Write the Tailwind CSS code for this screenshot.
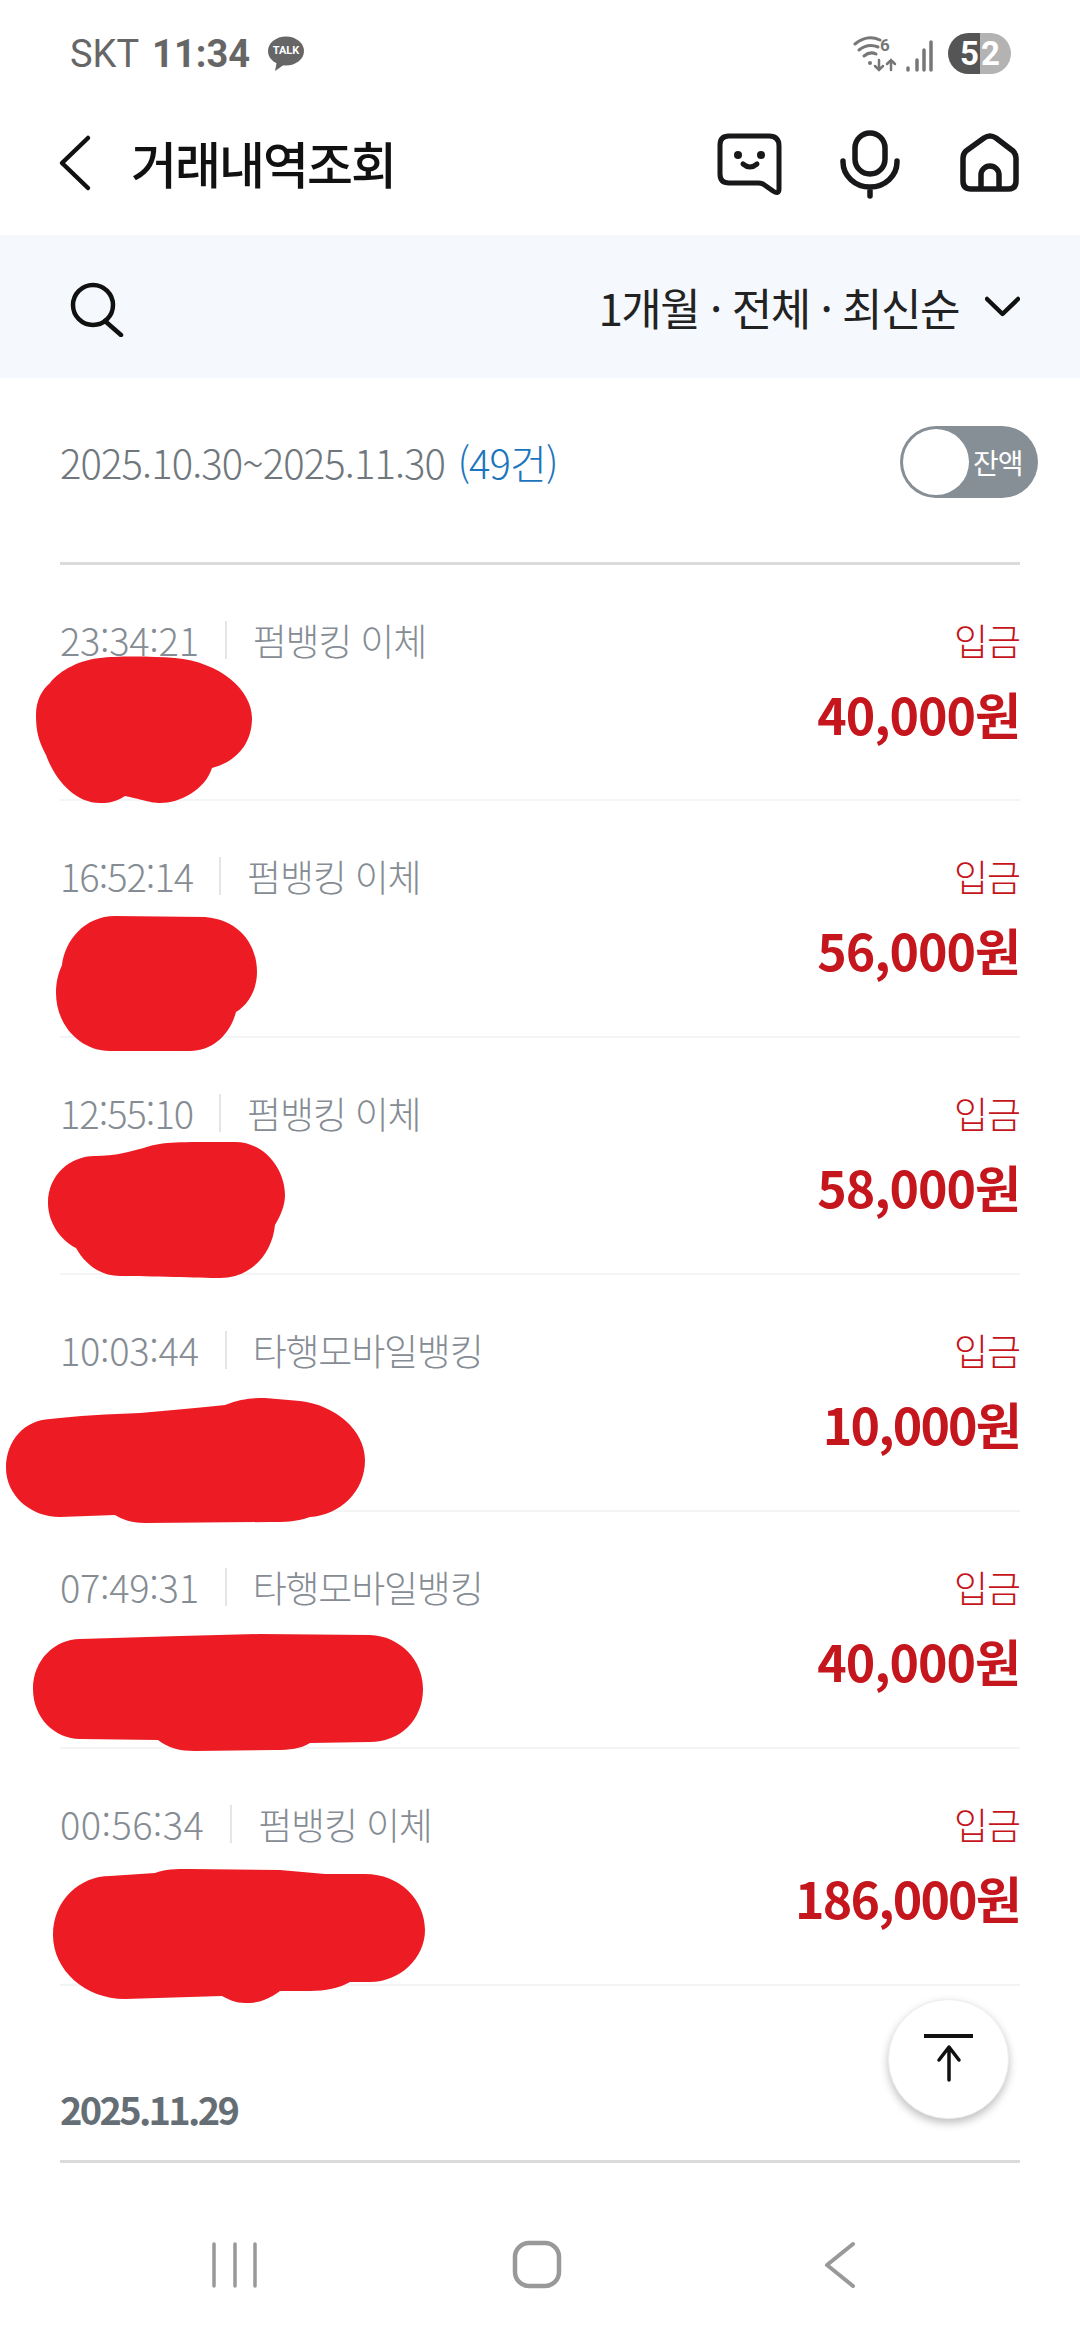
<!DOCTYPE html>
<html lang="ko">
  <head>
    <meta charset="UTF-8" />
    <meta name="viewport" content="width=device-width, initial-scale=1.0" />
    <title>거래내역조회</title>
    <script src="https://cdn.jsdelivr.net/npm/@tailwindcss/browser@4"></script>
  </head>
  <body class="bg-white">
    <div class="relative w-[1080px] h-[2340px] overflow-hidden bg-white flex flex-col font-['Noto_Sans_CJK_KR','Noto_Sans',sans-serif]">
      <!-- Status bar -->
      <div class="h-[104px] pt-[3px] flex items-center justify-between pl-[70px] pr-[69px] text-[#666] font-['Roboto','Noto_Sans',sans-serif]">
        <div class="flex items-center">
          <span class="text-[38px] leading-none">SKT</span>
          <span class="ml-[13px] text-[38px] leading-none font-bold">11:34</span>
          <span class="relative ml-[18px] w-[36px] h-[36px]">
            <svg class="absolute inset-0" viewBox="0 0 36 36" width="36" height="36">
              <ellipse cx="18" cy="15" rx="18" ry="14.5" fill="#666" />
              <path d="M9 25 L7 35 L17 28Z" fill="#666" />
            </svg>
            <span class="absolute left-0 top-[9px] w-[36px] text-center text-white text-[11px] leading-[12px] font-bold">TALK</span>
          </span>
        </div>
        <div class="flex items-center">
          <svg viewBox="853 30 44 44" width="44" height="44" fill="none" stroke="#777" stroke-linecap="round">
            <path d="M855 42 Q867 32 880 38" stroke-width="3" />
            <path d="M859 48 Q868 41 878 45" stroke-width="3" />
            <path d="M864 54 Q870 49 876 52" stroke-width="3" />
            <circle cx="870" cy="61" r="2" fill="#777" stroke="none" />
            <path d="M879 58 V68 M875 64 L879 68 L883 64 M891 68 V58 M887 62 L891 58 L895 62" stroke-width="2.5" />
          </svg>
          <span class="absolute left-[880px] top-[36px] text-[#777] text-[17px] leading-[18px] font-bold">6</span>
          <svg class="ml-[9px]" viewBox="906 30 28 44" width="28" height="44" fill="none" stroke="#777" stroke-width="3.5" stroke-linecap="round">
            <path d="M908 66 V68 M917 58 V68 M924 48 V68 M931 40 V68" />
          </svg>
          <div class="ml-[14px] w-[63px] h-[41px] rounded-full overflow-hidden flex text-white text-[33px] leading-[41px] font-bold">
            <span class="w-[32px] bg-[#555] text-right pr-[1px]">5</span>
            <span class="w-[31px] bg-[#b3b3b3] pl-[1px]">2</span>
          </div>
        </div>
      </div>

      <!-- Header -->
      <div class="h-[131px] pb-[10px] flex items-center justify-between pl-[50px] pr-[50px] shrink-0">
        <div class="flex items-center">
          <svg viewBox="50 125 50 80" width="50" height="80" fill="none" stroke="#111" stroke-width="4.5" stroke-linecap="round" stroke-linejoin="round">
            <path d="M88 138 L62 163 L88 188" />
          </svg>
          <h1 class="ml-[31px] mb-[6px] text-[50px] leading-none font-medium tracking-[-2px] text-[#111]">거래내역조회</h1>
        </div>
        <div class="flex items-center gap-[40px]">
          <svg viewBox="710 125 80 80" width="80" height="80" fill="none" stroke="#18181a" stroke-width="5" stroke-linecap="round" stroke-linejoin="round">
            <path d="M729 136 H769 Q779 136 779 146 V189 Q779 195 773 191 L763 184 Q761 183 758 183 H729 Q720 183 720 174 V145 Q720 136 729 136Z" />
            <circle cx="738" cy="155" r="4" fill="#18181a" stroke="none" />
            <circle cx="761" cy="155" r="4" fill="#18181a" stroke="none" />
            <path d="M743 164 Q750 170 757 164" />
          </svg>
          <svg viewBox="830 125 80 80" width="80" height="80" fill="none" stroke="#18181a" stroke-width="5.5" stroke-linecap="round">
            <rect x="855" y="133" width="30" height="41" rx="15" />
            <path d="M843 161 V162 A27 25 0 0 0 897 162 V161 M870 188 V196" />
          </svg>
          <svg viewBox="950 125 80 80" width="80" height="80" fill="none" stroke="#18181a" stroke-width="5.5" stroke-linejoin="round">
            <path d="M963 158 Q963 154 966 151 L984 138 Q990 134 996 138 L1013 151 Q1016 154 1016 158 V181 Q1016 189 1008 189 H971 Q963 189 963 181Z" />
            <path d="M981 189 V175 A9 9 0 0 1 999 175 V189" />
          </svg>
        </div>
      </div>

      <!-- Filter bar -->
      <div class="h-[143px] shrink-0 bg-[#f5f8fc] flex items-center justify-between pl-[70px] pr-[60px]">
        <svg viewBox="70 275 54 60" width="54" height="60" fill="none" stroke="#111" stroke-width="4.5" stroke-linecap="round">
          <circle cx="93" cy="303" r="20" />
          <path d="M105 319 L121 333" />
        </svg>
        <div class="flex items-center">
          <span class="text-[44px] leading-none tracking-[-1.5px] text-[#222]">1개월 · 전체 · 최신순</span>
          <svg class="ml-[26px]" viewBox="985 295 35 28" width="35" height="28" fill="none" stroke="#111" stroke-width="4.5" stroke-linecap="round" stroke-linejoin="round">
            <path d="M987 301 L1002.500 316 L1018 301" />
          </svg>
        </div>
      </div>

      <!-- Period + balance toggle -->
      <div class="h-[184px] shrink-0 pb-[16px] flex items-center justify-between pl-[60px] pr-[42px]">
        <div class="text-[40px] leading-none tracking-[-0.9px] font-light text-[#6f777d]">
          2025.10.30~2025.11.30 <span class="ml-[2px] text-[#1c75bc]">(49건)</span>
        </div>
        <div class="relative w-[138px] h-[72px] rounded-full bg-[#868e96] flex items-center">
          <div class="absolute left-[3px] top-[3px] w-[66px] h-[66px] rounded-full bg-white"></div>
          <span class="ml-[73px] text-white text-[28px] leading-none tracking-[-1px]">잔액</span>
        </div>
      </div>

      <div class="mx-[60px]">
        <div class="h-[3px] bg-[#d9dbdd]"></div>

        <div class="h-[236px] flex justify-between border-b-2 border-[#f3f4f5] pt-[51px]">
          <div class="flex items-start text-[37px] leading-[48px] tracking-[-1.2px] font-light text-[#858c93]">
            <span class="text-[38px] tracking-[-0.3px]">23:34:21</span>
            <span class="mx-[26px] mt-[5px] w-[2px] h-[38px] bg-[#e3e5e7]"></span>
            <span>펌뱅킹 이체</span>
          </div>
          <div class="flex flex-col items-end">
            <span class="text-[37px] leading-[48px] font-light tracking-[-1px] text-[#c5141b]">입금</span>
            <span class="mt-[25px] text-[50px] leading-[48px] font-bold tracking-[-1px] text-[#c4161c]">40,000원</span>
          </div>
        </div>

        <div class="h-[237px] flex justify-between border-b-2 border-[#f3f4f5] pt-[51px]">
          <div class="flex items-start text-[37px] leading-[48px] tracking-[-1.2px] font-light text-[#858c93]">
            <span class="text-[38px] tracking-[-1px]">16:52:14</span>
            <span class="mx-[26px] mt-[5px] w-[2px] h-[38px] bg-[#e3e5e7]"></span>
            <span>펌뱅킹 이체</span>
          </div>
          <div class="flex flex-col items-end">
            <span class="text-[37px] leading-[48px] font-light tracking-[-1px] text-[#c5141b]">입금</span>
            <span class="mt-[25px] text-[50px] leading-[48px] font-bold tracking-[-1px] text-[#c4161c]">56,000원</span>
          </div>
        </div>

        <div class="h-[237px] flex justify-between border-b-2 border-[#f3f4f5] pt-[51px]">
          <div class="flex items-start text-[37px] leading-[48px] tracking-[-1.2px] font-light text-[#858c93]">
            <span class="text-[38px] tracking-[-1px]">12:55:10</span>
            <span class="mx-[26px] mt-[5px] w-[2px] h-[38px] bg-[#e3e5e7]"></span>
            <span>펌뱅킹 이체</span>
          </div>
          <div class="flex flex-col items-end">
            <span class="text-[37px] leading-[48px] font-light tracking-[-1px] text-[#c5141b]">입금</span>
            <span class="mt-[25px] text-[50px] leading-[48px] font-bold tracking-[-1px] text-[#c4161c]">58,000원</span>
          </div>
        </div>

        <div class="h-[237px] flex justify-between border-b-2 border-[#f3f4f5] pt-[51px]">
          <div class="flex items-start text-[37px] leading-[48px] tracking-[-1.2px] font-light text-[#858c93]">
            <span class="text-[38px] tracking-[-0.3px]">10:03:44</span>
            <span class="mx-[26px] mt-[5px] w-[2px] h-[38px] bg-[#e3e5e7]"></span>
            <span>타행모바일뱅킹</span>
          </div>
          <div class="flex flex-col items-end">
            <span class="text-[37px] leading-[48px] font-light tracking-[-1px] text-[#c5141b]">입금</span>
            <span class="mt-[25px] text-[50px] leading-[48px] font-bold tracking-[-1.8px] text-[#c4161c]">10,000원</span>
          </div>
        </div>

        <div class="h-[237px] flex justify-between border-b-2 border-[#f3f4f5] pt-[51px]">
          <div class="flex items-start text-[37px] leading-[48px] tracking-[-1.2px] font-light text-[#858c93]">
            <span class="text-[38px] tracking-[-0.3px]">07:49:31</span>
            <span class="mx-[26px] mt-[5px] w-[2px] h-[38px] bg-[#e3e5e7]"></span>
            <span>타행모바일뱅킹</span>
          </div>
          <div class="flex flex-col items-end">
            <span class="text-[37px] leading-[48px] font-light tracking-[-1px] text-[#c5141b]">입금</span>
            <span class="mt-[25px] text-[50px] leading-[48px] font-bold tracking-[-1px] text-[#c4161c]">40,000원</span>
          </div>
        </div>

        <div class="h-[237px] flex justify-between border-b-2 border-[#f3f4f5] pt-[51px]">
          <div class="flex items-start text-[37px] leading-[48px] tracking-[-1.2px] font-light text-[#858c93]">
            <span class="text-[38px] tracking-[0.4px]">00:56:34</span>
            <span class="mx-[26px] mt-[5px] w-[2px] h-[38px] bg-[#e3e5e7]"></span>
            <span>펌뱅킹 이체</span>
          </div>
          <div class="flex flex-col items-end">
            <span class="text-[37px] leading-[48px] font-light tracking-[-1px] text-[#c5141b]">입금</span>
            <span class="mt-[25px] text-[50px] leading-[48px] font-bold tracking-[-1.8px] text-[#c4161c]">186,000원</span>
          </div>
        </div>

        <!-- Next day heading -->
        <div class="h-[177px] border-b-[3px] border-[#d9dbdd] pt-[99px]">
          <span class="block text-[38px] leading-[48px] font-bold tracking-[-2.7px] text-[#666e75]">2025.11.29</span>
        </div>
      </div>

      <!-- Android nav bar -->
      <div class="flex items-center h-[46px] mt-[78.500px] pl-[212px]">
        <svg viewBox="212 2243 46 46" width="46" height="46" fill="none" stroke="#999" stroke-width="3.5" stroke-linecap="round">
          <path d="M214 2245 V2287 M235 2245 V2287 M255 2245 V2287" />
        </svg>
        <svg class="ml-[253px]" viewBox="511 2240 52 52" width="52" height="52" fill="none" stroke="#999" stroke-width="4.5">
          <rect x="515" y="2244" width="44" height="43" rx="14" />
        </svg>
        <svg class="ml-[260px]" viewBox="823 2241 34 50" width="34" height="50" fill="none" stroke="#999" stroke-width="4" stroke-linecap="round" stroke-linejoin="round">
          <path d="M853 2245 L827 2266 L853 2287" />
        </svg>
      </div>

      <!-- Scroll to top button -->
      <button class="absolute left-[888px] top-[1999px] w-[121px] h-[120px] rounded-full bg-white border border-[#eee] shadow-[0_4px_8px_rgba(0,0,0,0.25)] flex items-center justify-center">
        <svg viewBox="0 0 60 60" width="60" height="60" fill="none" stroke="#111" stroke-linecap="round" stroke-linejoin="round">
          <path d="M5 7 H54" stroke-width="4" stroke-linecap="butt" />
          <path d="M30 19 V51 M20 31 L30 18 L40 31" stroke-width="3.5" />
        </svg>
      </button>

      <!-- Red marker redactions over the names -->
      <svg class="absolute left-0 top-0 pointer-events-none" viewBox="0 0 1080 2340" width="1080" height="2340" fill="#ed1c24">
        <path d="M100 658 C115 656 150 656 175 658 C220 662 252 690 252 718 C252 745 235 762 212 768 C205 790 180 803 160 803 C150 803 145 800 125 796 C115 803 105 803 100 803 C75 803 55 780 46 755 C38 740 36 730 36 715 C36 700 42 690 50 683 C60 670 80 660 100 658Z" />
        <path d="M115 916 L205 917 C240 920 257 945 257 972 C257 990 248 1005 236 1012 C230 1035 212 1051 190 1051 L110 1051 C80 1051 56 1025 56 993 C56 980 59 972 62 965 C65 940 85 916 115 916Z" />
        <path d="M95 1156 C115 1156 130 1152 150 1146 C165 1142 175 1142 235 1142 C265 1142 285 1170 285 1195 C285 1205 281 1215 275 1225 C272 1255 250 1278 220 1278 C200 1278 150 1276 120 1276 C100 1276 85 1264 76 1248 C60 1240 48 1222 48 1203 C48 1175 70 1156 95 1156Z" />
        <path d="M50 1419 C75 1416 110 1414 140 1413 C170 1410 200 1408 225 1405 C240 1399 250 1398 265 1398 L300 1401 C335 1405 365 1430 365 1460 C365 1492 340 1515 310 1517 C295 1522 285 1522 270 1522 L145 1523 C130 1523 122 1519 115 1515 L60 1517 C30 1517 6 1495 6 1468 C6 1440 25 1420 50 1419Z" />
        <path d="M80 1639 L180 1636 L260 1634 L370 1635 C400 1636 423 1660 423 1689 C423 1720 400 1742 370 1742 L310 1743 C300 1749 290 1750 275 1750 L195 1751 C180 1751 168 1748 158 1740 L80 1739 C55 1739 33 1718 33 1689 C33 1660 55 1639 80 1639Z" />
        <path d="M110 1876 L155 1873 C165 1869 175 1869 190 1869 L280 1870 L325 1874 L365 1874 C400 1874 425 1900 425 1930 C425 1958 400 1982 370 1982 L350 1982 C340 1988 325 1991 310 1991 L280 1991 C265 2002 255 2003 245 2003 C235 2003 230 2000 222 1996 L125 1999 C85 1999 53 1970 53 1935 C53 1900 80 1876 110 1876Z" />
      </svg>
    </div>
  </body>
</html>
